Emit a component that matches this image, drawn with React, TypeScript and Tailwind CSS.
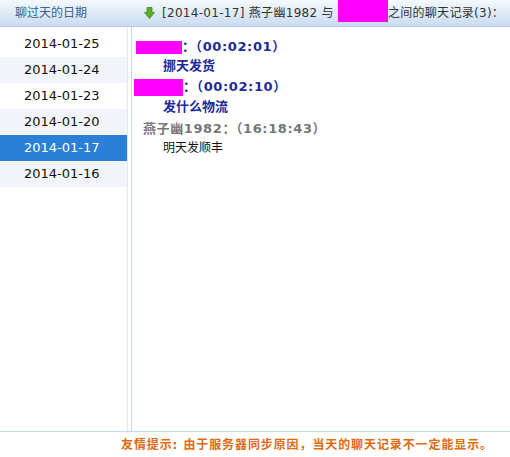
import React from 'react';

const dates = ['2014-01-25', '2014-01-24', '2014-01-23', '2014-01-20', '2014-01-17', '2014-01-16'];

const font = { fontFamily: '"DejaVu Sans", "Noto Sans CJK SC", sans-serif' };

const ArrowDown = () => (
  <svg width="11" height="12" viewBox="0 0 11 12">
    <path d="M3 0.5h5v5h2.5L5.5 11.5 0.5 5.5H3z" fill="#5cae2a" stroke="#3f8a1a" strokeWidth="0.8" />
  </svg>
);

export default function App() {
  const selected = '2014-01-17';

  return (
    <div className="w-[510px] h-[457px] bg-white flex flex-col overflow-hidden" style={font}>
      {/* 头部 */}
      <div className="h-[27px] flex items-center bg-gradient-to-b from-[#f5f9fd] to-[#c9dcf1] border-b border-[#b4cbe4] whitespace-nowrap">
        <div className="w-[131px] shrink-0 pl-[15px] text-[12px] text-[#3b5f8f]">聊过天的日期</div>
        <div className="flex items-center pl-[13px] text-[12px] text-[#333]">
          <ArrowDown />
          <span className="ml-[7px] tracking-[0.3px]">[2014-01-17] 燕子幽1982 与</span>
          <span className="inline-block w-[50px] h-[22px] bg-[#ff00ff] ml-[4px] -mt-[4px] shrink-0" />
          <span className="tracking-[0.3px]">之间的聊天记录(3)：</span>
        </div>
      </div>

      {/* 主体 */}
      <div className="flex-1 flex">
        <div className="w-[128px] pt-[4px] border-r border-[#e3e9f0]">
          {dates.map((d, i) => (
            <div
              key={d}
              className={
                'h-[26px] flex items-center pl-[24px] text-[13px] ' +
                (d === selected
                  ? 'bg-[#2b7fd6] text-white'
                  : i % 2 === 1
                  ? 'bg-[#f1f5fa] text-[#111]'
                  : 'bg-white text-[#111]')
              }
            >
              {d}
            </div>
          ))}
        </div>
        <div className="w-[3px]" />
        <div className="flex-1 border-l border-[#c8d8ea] pt-[11px] text-[13px]">
          <div className="flex items-center h-[18px] pl-[4px] font-bold text-[#1c2a9a]">
            <span className="inline-block w-[46px] h-[13px] bg-[#ff00ff]" />
            <span className="tracking-[0.6px]">：（00:02:01）</span>
          </div>
          <div className="h-[20px] flex items-center pl-[31px] font-bold text-[#1c2a9a]">挪天发货</div>
          <div className="flex items-center h-[22px] pl-[2px] font-bold text-[#1c2a9a]">
            <span className="inline-block w-[49px] h-[17px] bg-[#ff00ff]" />
            <span className="tracking-[0.6px]">：（00:02:10）</span>
          </div>
          <div className="h-[18px] flex items-center pl-[31px] font-bold text-[#1c2a9a]">发什么物流</div>
          <div className="h-[26px] flex items-center pl-[11px] font-bold text-[#777] tracking-[0.6px]">燕子幽1982：（16:18:43）</div>
          <div className="h-[12px] flex items-center pl-[31px] text-[12px] text-[#111]">明天发顺丰</div>
        </div>
      </div>

      {/* 底部 */}
      <div className="h-[26px] border-t border-[#c8d8ea] flex items-center pl-[121px] text-[12px] font-bold text-[#e06a10] tracking-[0.9px] whitespace-nowrap">
        友情提示: 由于服务器同步原因，当天的聊天记录不一定能显示。
      </div>
    </div>
  );
}
